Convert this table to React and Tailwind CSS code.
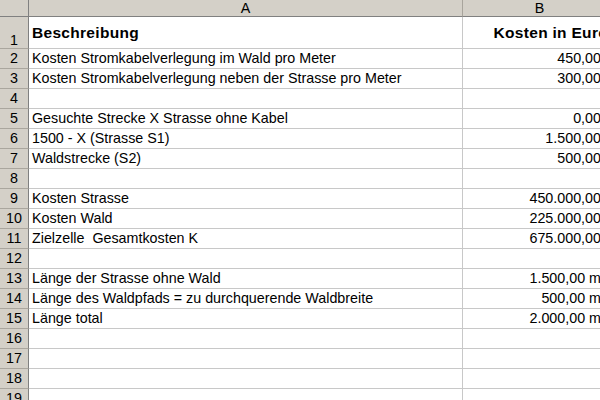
const rows = [
  { a: 'Beschreibung', b: 'Kosten in Euro', bold: true, tall: true },
  { a: 'Kosten Stromkabelverlegung im Wald pro Meter', b: '450,00' },
  { a: 'Kosten Stromkabelverlegung neben der Strasse pro Meter', b: '300,00' },
  {},
  { a: 'Gesuchte Strecke X Strasse ohne Kabel', b: '0,00' },
  { a: '1500 - X (Strasse S1)', b: '1.500,00' },
  { a: 'Waldstrecke (S2)', b: '500,00' },
  {},
  { a: 'Kosten Strasse', b: '450.000,00' },
  { a: 'Kosten Wald', b: '225.000,00' },
  { a: 'Zielzelle\u00a0 Gesamtkosten K', b: '675.000,00' },
  {},
  { a: 'Länge der Strasse ohne Wald', b: '1.500,00 m' },
  { a: 'Länge des Waldpfads = zu durchquerende Waldbreite', b: '500,00 m' },
  { a: 'Länge total', b: '2.000,00 m' },
  {},
  {},
  {},
  {},
];

export default function App() {
  return (
    <div
      className="w-[600px] h-[400px] overflow-hidden bg-white text-black"
      style={{ fontFamily: '"Liberation Sans", Arial, sans-serif' }}
    >
      <div className="w-[616px] grid grid-cols-[29px_434px_153px] text-[14.3px] leading-none">
        {/* column header */}
        <div className="h-[17px] bg-[#d4d0c8] border-r border-b border-[#808080]" />
        <div className="h-[17px] bg-[#d4d0c8] border-r border-b border-r-[#a8a49c] border-b-[#808080] flex items-center justify-center">
          A
        </div>
        <div className="h-[17px] bg-[#d4d0c8] border-b border-[#808080] flex items-center justify-center">
          B
        </div>

        {rows.map((r, i) => (
          <Row key={i} n={i + 1} r={r} />
        ))}
      </div>
    </div>
  );
}

function Row({ n, r }) {
  const h = r.tall ? 'h-[32px]' : 'h-[20px]';
  return (
    <>
      <div
        className={`${h} bg-[#d4d0c8] border-r border-b border-r-[#808080] border-b-[#aaa69e] flex justify-center pb-[1px] ${
          r.tall ? 'items-end' : 'items-center'
        }`}
      >
        {n}
      </div>
      <div
        className={`${h} border-r border-b border-[#c8c8c8] flex items-center pl-[3px] whitespace-nowrap overflow-hidden ${
          r.bold ? 'font-bold text-[15.5px] tracking-[0.3px]' : ''
        }`}
      >
        {r.a}
      </div>
      <div
        className={`${h} border-b border-[#c8c8c8] flex items-center justify-end whitespace-nowrap ${
          r.bold ? 'font-bold text-[15.5px] tracking-[0.3px] pr-[8px]' : 'pr-[15px]'
        }`}
      >
        {r.b}
      </div>
    </>
  );
}
